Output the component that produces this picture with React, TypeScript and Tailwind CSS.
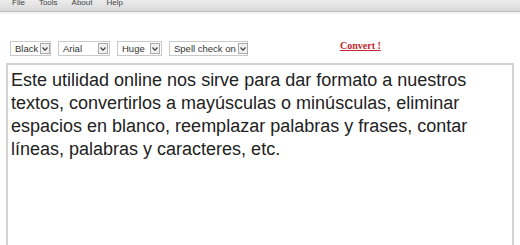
import React from 'react';

const menu = ['File', 'Tools', 'About', 'Help'];

const SelectBox: React.FC<{ label: string; width: string }> = ({ label, width }) => (
  <div className={`flex items-center justify-between gap-[2px] h-[15px] border border-[#c9c9c9] bg-white pl-[4px] pr-[1px] whitespace-nowrap ${width}`}>
    <span className="text-[9.5px] text-[#333] leading-none">{label}</span>
    <span className="flex items-center justify-center shrink-0 w-[10px] h-[11px] border border-[#a8a8a8] bg-[#f0f0f0]">
      <svg width="6" height="4" viewBox="0 0 6 4">
        <path d="M0.5 0.5 L3 3.2 L5.5 0.5" fill="none" stroke="#444" strokeWidth="1.2" />
      </svg>
    </span>
  </div>
);

export default function App() {
  return (
    <div className="w-[520px] h-[245px] bg-white overflow-hidden font-['Liberation_Sans',Arial,sans-serif]">
      {/* top menu bar */}
      <div className="h-[12px] bg-gradient-to-b from-[#ececec] to-[#d9d9d9] border-b border-[#bdbdbd] flex items-end">
        <div className="flex gap-[14px] pl-[12px] -translate-y-[4px] text-[8px] text-[#444] leading-none">
          {menu.map(m => (
            <span key={m}>{m}</span>
          ))}
        </div>
      </div>
      <div className="h-[2px] bg-[#f3f3f3]" />

      {/* toolbar */}
      <div className="flex items-center mt-[27px] pl-[10px] h-[15px]">
        <div className="flex items-center gap-[7px]">
          <SelectBox label="Black" width="w-[41px]" />
          <SelectBox label="Arial" width="w-[52px]" />
          <SelectBox label="Huge" width="w-[45px]" />
          <SelectBox label="Spell check on" width="w-[79px]" />
        </div>
        <a className="ml-[92px] -mt-[6px] font-['Liberation_Serif',serif] font-bold text-[10px] text-[#c0282d] underline leading-none">
          Convert !
        </a>
      </div>

      {/* text area */}
      <div className="mt-[7px] ml-[6px] mr-[6px] h-[200px] border-2 border-[#d2d2d2] border-b-0 pl-[3px] pt-[4px]">
        <p className="text-[18px] leading-[23px] text-[#222]">
          Este utilidad online nos sirve para dar formato a nuestros textos, convertirlos a mayúsculas o minúsculas, eliminar espacios en blanco, reemplazar palabras y frases, contar líneas, palabras y caracteres, etc.
        </p>
      </div>
    </div>
  );
}
